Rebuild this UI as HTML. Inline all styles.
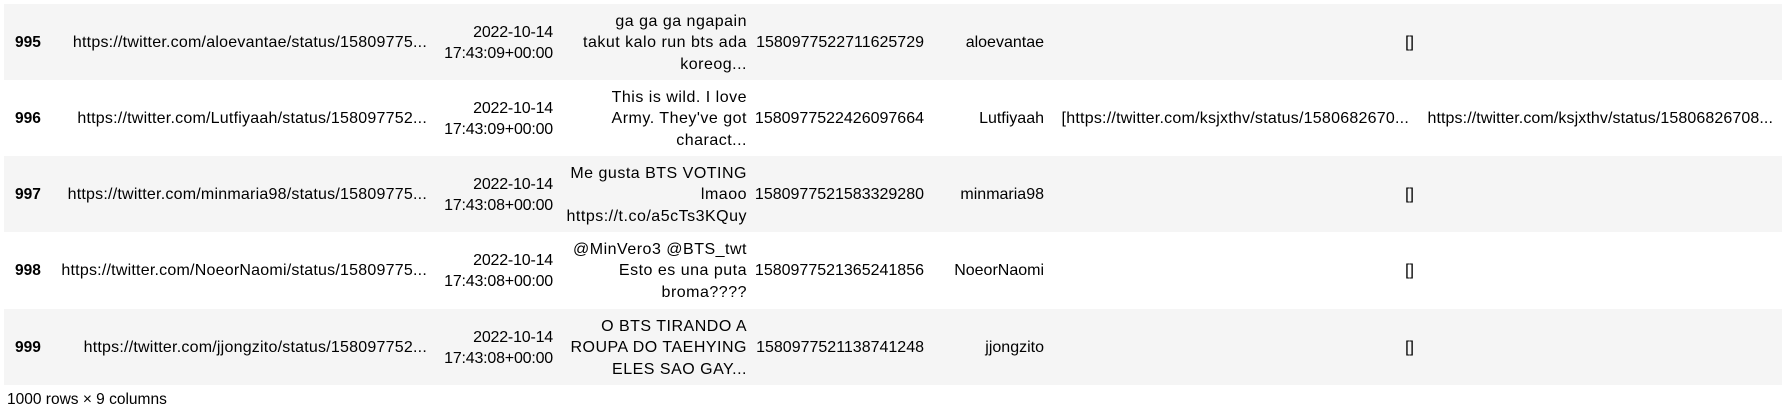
<!DOCTYPE html>
<html><head><meta charset="utf-8"><style>
html,body{margin:0;padding:0;background:#fff;width:1782px;height:412px;overflow:hidden;position:relative;
font-family:"Liberation Sans","Noto Sans CJK KR",sans-serif;font-size:16px;color:#000;}
.row{position:absolute;left:4px;width:1778px;height:76px;}
.g{background:#f5f5f5;}
.c{position:absolute;top:1px;height:76px;display:flex;align-items:center;justify-content:flex-end;text-align:right;line-height:21.5px;white-space:nowrap;}
.i{left:11px;font-weight:bold;justify-content:flex-start;font-size:15.5px;}
.u{right:1355px;letter-spacing:0.22px;}
.d{right:1229px;letter-spacing:-0.2px;}
.t{right:1035px;letter-spacing:0.5px;}
.n{right:858px;}
.us{right:738px;}
.e{right:368px;}
.foot{position:absolute;left:7px;top:391px;font-size:15.5px;}
</style></head><body>

<div class="row g" style="top:4px">
<div class="c i">995</div>
<div class="c u">https://twitter.com/aloevantae/status/15809775...</div>
<div class="c d">2022-10-14<br>17:43:09+00:00</div>
<div class="c t">ga ga ga ngapain<br>takut kalo run bts ada<br>koreog...</div>
<div class="c n">1580977522711625729</div>
<div class="c us">aloevantae</div>
<div class="c e">[]</div>
</div>

<div class="row" style="top:80px">
<div class="c i">996</div>
<div class="c u">https://twitter.com/Lutfiyaah/status/158097752...</div>
<div class="c d">2022-10-14<br>17:43:09+00:00</div>
<div class="c t">This is wild. I love<br>Army. They've got<br>charact...</div>
<div class="c n">1580977522426097664</div>
<div class="c us">Lutfiyaah</div>
<div class="c" style="right:373px;letter-spacing:0.23px">[https://twitter.com/ksjxthv/status/1580682670...</div>
<div class="c" style="right:9px;letter-spacing:0.1px">https://twitter.com/ksjxthv/status/15806826708...</div>
</div>

<div class="row g" style="top:156px">
<div class="c i">997</div>
<div class="c u">https://twitter.com/minmaria98/status/15809775...</div>
<div class="c d">2022-10-14<br>17:43:08+00:00</div>
<div class="c t">Me gusta BTS VOTING<br>lmaoo<br>https://t.co/a5cTs3KQuy</div>
<div class="c n">1580977521583329280</div>
<div class="c us">minmaria98</div>
<div class="c e">[]</div>
</div>

<div class="row" style="top:232px">
<div class="c i">998</div>
<div class="c u">https://twitter.com/NoeorNaomi/status/15809775...</div>
<div class="c d">2022-10-14<br>17:43:08+00:00</div>
<div class="c t">@MinVero3 @BTS_twt<br>Esto es una puta<br>broma????</div>
<div class="c n">1580977521365241856</div>
<div class="c us">NoeorNaomi</div>
<div class="c e">[]</div>
</div>

<div class="row g" style="top:309px">
<div class="c i">999</div>
<div class="c u">https://twitter.com/jjongzito/status/158097752...</div>
<div class="c d">2022-10-14<br>17:43:08+00:00</div>
<div class="c t">O BTS TIRANDO A<br>ROUPA DO TAEHYING<br>ELES SAO GAY...</div>
<div class="c n">1580977521138741248</div>
<div class="c us">jjongzito</div>
<div class="c e">[]</div>
</div>

<div class="foot">1000 rows × 9 columns</div>
</body></html>
